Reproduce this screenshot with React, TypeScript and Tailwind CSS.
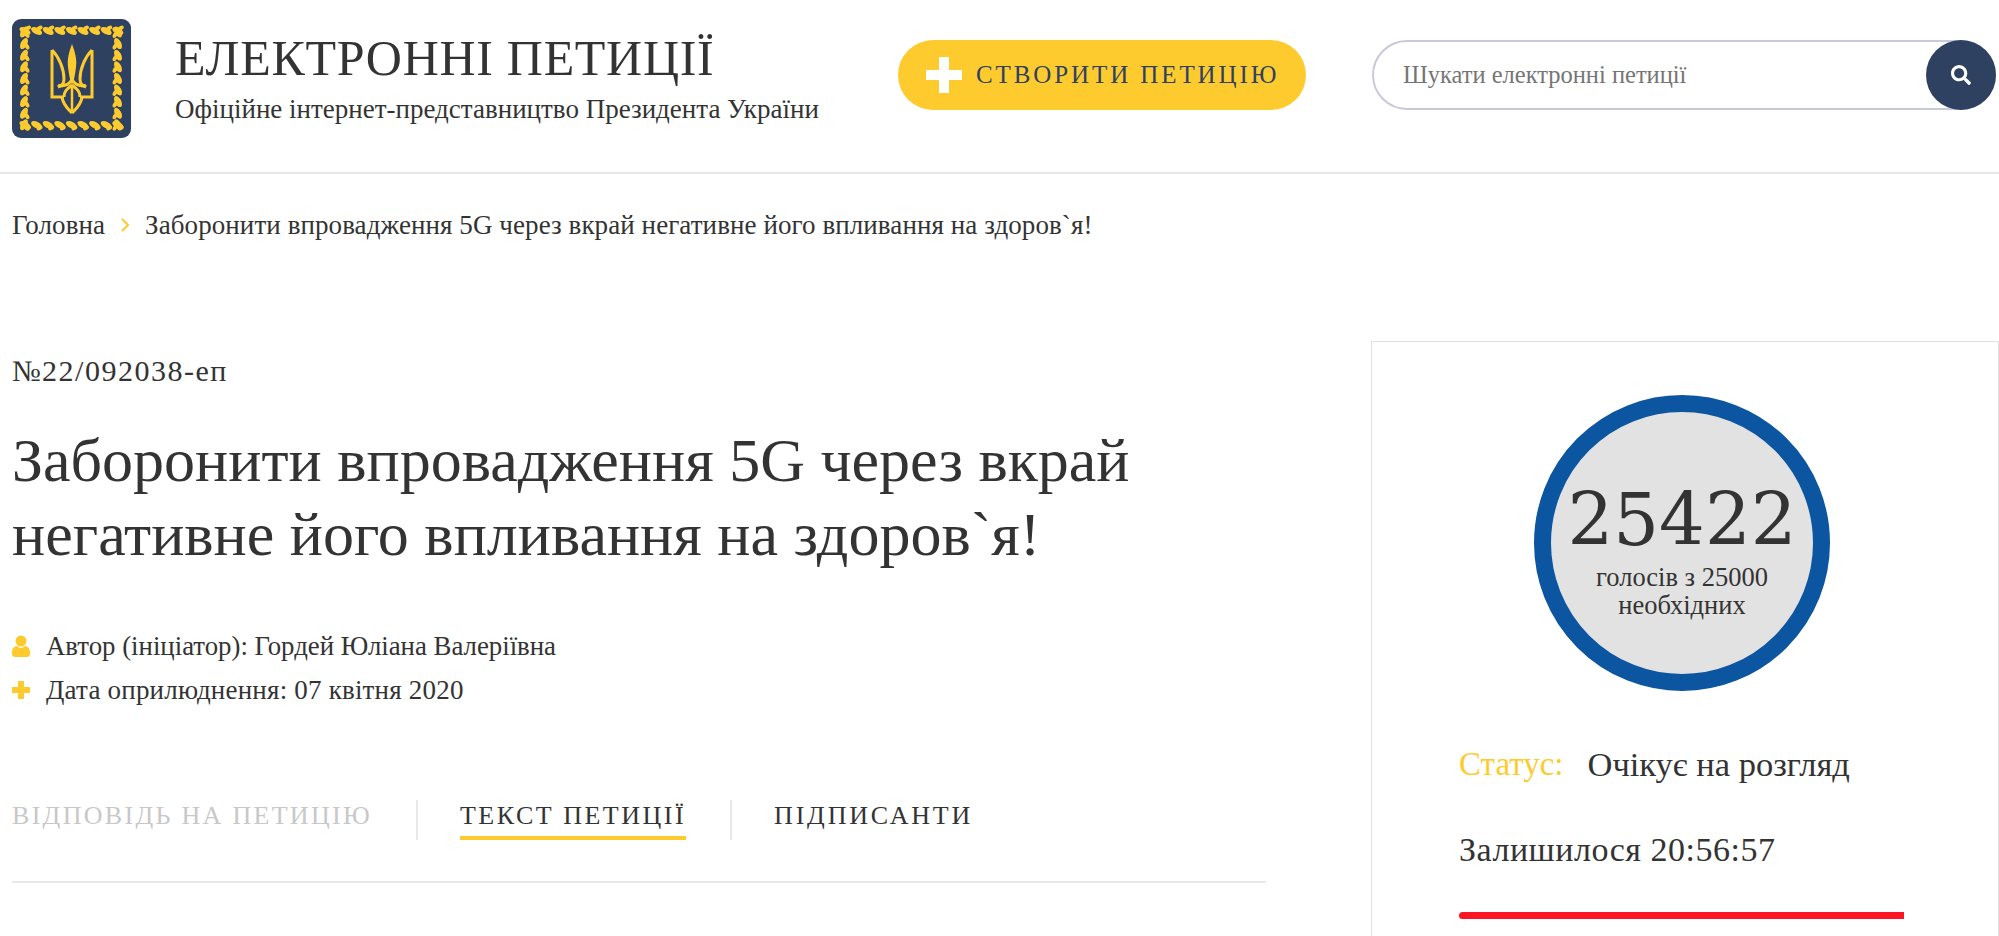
import { FaSearch } from "react-icons/fa";

const serif = "font-['Liberation_Serif','Noto_Sans_CJK_SC',serif]";

const leafPositions = Array.from({ length: 9 }, (_, i) => 13 + i * 11.6);

const Prong = () => (
  <g fill="none" stroke="#fecb2f" strokeWidth="3">
    <path d="M40 31V78H52" />
    <path d="M40 31C47 38 52 50 52 60C52 65 49 68 46 66" />
    <path d="M46 68C52 66 57 67 60 60" />
    <path d="M52 78C52 72 55 70 60 66" />
    <path d="M50 78C51 86 56 90 60 94" />
  </g>
);

const Logo = () => (
  <svg width="119" height="119" viewBox="0 0 119 119" className="shrink-0">
    <rect width="119" height="119" rx="9" fill="#2f4160" />
    <g fill="#fecb2f">
      {leafPositions.map((p) => (
        <g key={p}>
          <ellipse cx={p} cy="12" rx="6" ry="3.2" transform={`rotate(28 ${p} 12)`} />
          <ellipse cx={p + 3} cy="9" rx="3.2" ry="2" transform={`rotate(-30 ${p + 3} 9)`} />
          <ellipse cx={p} cy="106" rx="6" ry="3.2" transform={`rotate(28 ${p} 106)`} />
          <ellipse cx={p + 3} cy="109" rx="3.2" ry="2" transform={`rotate(-30 ${p + 3} 109)`} />
          <ellipse cx="12" cy={p} rx="3.2" ry="6" transform={`rotate(28 12 ${p})`} />
          <ellipse cx="15" cy={p + 3} rx="2" ry="3.2" transform={`rotate(-30 15 ${p + 3})`} />
          <ellipse cx="106" cy={p} rx="3.2" ry="6" transform={`rotate(-28 106 ${p})`} />
          <ellipse cx="103" cy={p + 3} rx="2" ry="3.2" transform={`rotate(30 103 ${p + 3})`} />
        </g>
      ))}
    </g>
    <Prong />
    <g transform="matrix(-1 0 0 1 120 0)">
      <Prong />
    </g>
    <path d="M60 25C57 33 55 40 56 48C57 56 58 62 60 66C62 62 63 56 64 48C65 40 63 33 60 25Z" fill="#fecb2f" />
    <path d="M60 68V92" stroke="#fecb2f" strokeWidth="2.5" />
  </svg>
);

const Header = () => (
  <header className="flex h-[174px] items-start border-b-2 border-[#e8e8e8] pl-3">
    <div className="mt-[19px]">
      <Logo />
    </div>
    <div className="ml-11 mt-[27px] w-[723px] shrink-0">
      <div className="text-[50px] leading-[62px] tracking-[0.7px] text-[#333]">ЕЛЕКТРОННІ ПЕТИЦІЇ</div>
      <div className="mt-[4px] text-[27px] leading-8 text-[#333]">
        Офіційне інтернет-представництво Президента України
      </div>
    </div>
    <button className="mt-10 flex h-[70px] w-[408px] shrink-0 items-center rounded-full bg-[#fecb2f] pl-[28px]">
      <span className="relative h-[36px] w-[36px]">
        <span className="absolute left-0 top-[13px] h-[10px] w-[36px] bg-white" />
        <span className="absolute left-[13px] top-0 h-[36px] w-[10px] bg-white" />
      </span>
      <span className="ml-[14px] text-[25px] tracking-[2.9px] text-[#2f4160]">СТВОРИТИ ПЕТИЦІЮ</span>
    </button>
    <div className="ml-[66px] mr-[3px] mt-10 flex h-[70px] flex-1 items-center rounded-full border-2 border-[#c9c9d9] pl-[29px]">
      <span className="flex-1 text-[24.5px] text-[#757575]">Шукати електронні петиції</span>
      <span className="-my-[2px] -mr-[2px] flex h-[70px] w-[70px] items-center justify-center rounded-full bg-[#2f4160]">
        <FaSearch size={20} color="#fff" />
      </span>
    </div>
  </header>
);

const Tabs = () => (
  <div className="mt-[94px] flex h-[40px] items-start text-[26px] tracking-[2.3px]">
    <span className="pr-[44px] leading-8 text-[#c8c8c8]">ВІДПОВІДЬ НА ПЕТИЦІЮ</span>
    <span className="h-10 w-[2px] bg-[#e8e8e8]" />
    <span className="ml-[42px] h-10 border-b-4 border-[#fecb2f] leading-8 tracking-[2.5px] text-[#333]">ТЕКСТ ПЕТИЦІЇ</span>
    <span className="ml-[44px] h-10 w-[2px] bg-[#e8e8e8]" />
    <span className="ml-[42px] leading-8 tracking-[2.8px] text-[#333]">ПІДПИСАНТИ</span>
  </div>
);

const Sidebar = () => (
  <aside className="mt-[167px] h-[700px] w-[628px] shrink-0 border border-[#e0e0e0] pt-[53px]">
    <div className="ml-[162px] flex h-[296px] w-[296px] flex-col items-center rounded-full border-[17px] border-[#0c55a0] bg-[#e2e2e2] pt-[72px] text-[#333]">
      <div className="font-['DejaVu_Serif',serif] text-[72px] leading-[72px]">25422</div>
      <div className="mt-[7px] w-[220px] text-center text-[26.5px] leading-[28px]">голосів з 25000 необхідних</div>
    </div>
    <div className="ml-[87px] mt-[55px] flex text-[33px] leading-9 text-[#333]">
      <span className="text-[#fecb2f]">Статус:</span>
      <span className="ml-[24px] text-[34.5px]">Очікує на розгляд</span>
    </div>
    <div className="ml-[87px] mt-[50px] text-[34px] leading-9 tracking-[0.5px] text-[#333]">Залишилося 20:56:57</div>
    <div className="ml-[87px] mt-[44px] h-[7px] w-[445px] rounded-l-full bg-[#fc1525]" />
  </aside>
);

export default function App() {
  return (
    <div className={`h-[936px] w-[1999px] overflow-hidden bg-white ${serif}`}>
      <Header />
      <div className="flex pl-3">
        <main className="w-[1254px] shrink-0">
          <nav className="mt-[35px] flex items-center text-[27px] leading-8 tracking-[0.08px] text-[#333]">
            <span>Головна</span>
            <svg width="8" height="14" viewBox="0 0 8 14" fill="none" stroke="#fecb2f" strokeWidth="2" className="mx-[16px]">
              <path d="M1 1l6 6-6 6" />
            </svg>
            <span>Заборонити впровадження 5G через вкрай негативне його впливання на здоров`я!</span>
          </nav>
          <div className="mt-[114px] text-[30px] leading-8 tracking-[1.5px] text-[#333]">№22/092038-еп</div>
          <h1 className="mt-[36px] w-[1200px] text-[62px] leading-[74px] text-[#333]">
            Заборонити впровадження 5G через вкрай негативне його впливання на здоров`я!
          </h1>
          <div className="mt-[59px] flex items-center text-[26.8px] leading-8 text-[#333]">
            <svg width="18" height="22" viewBox="0 0 18 22" fill="#fecb2f" className="mr-4">
              <circle cx="9" cy="6" r="5.5" />
              <path d="M0 17c0-4 3-6 5-6 1 1 3 2 4 2s3-1 4-2c2 0 5 2 5 6v2c0 2-1 3-3 3H3c-2 0-3-1-3-3Z" />
            </svg>
            Автор (ініціатор): Гордей Юліана Валеріївна
          </div>
          <div className="mt-[12px] flex items-center text-[27px] leading-8 tracking-[0.2px] text-[#333]">
            <span className="relative mr-4 h-[18px] w-[18px]">
              <span className="absolute left-0 top-[6px] h-[6px] w-[18px] bg-[#fecb2f]" />
              <span className="absolute left-[6px] top-0 h-[18px] w-[6px] bg-[#fecb2f]" />
            </span>
            Дата оприлюднення: 07 квітня 2020
          </div>
          <Tabs />
          <div className="mt-[41px] h-[2px] bg-[#e8e8e8]" />
        </main>
        <div className="ml-[105px]">
          <Sidebar />
        </div>
      </div>
    </div>
  );
}
